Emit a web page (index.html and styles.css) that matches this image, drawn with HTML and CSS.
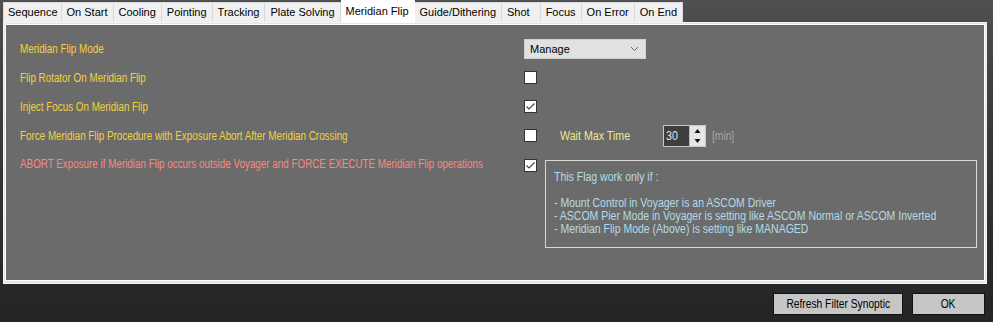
FILE: index.html
```html
<!DOCTYPE html>
<html>
    <head>
        <title>Setup - Meridian Flip</title>
        <link rel="stylesheet" href="styles.css">
    </head>
    <body>
        <div class="window">
            <div class="tabs">
                <div class="tab">Sequence</div>
                <div class="tab">On Start</div>
                <div class="tab">Cooling</div>
                <div class="tab">Pointing</div>
                <div class="tab">Tracking</div>
                <div class="tab">Plate Solving</div>
                <div class="tab selected">Meridian Flip</div>
                <div class="tab">Guide/Dithering</div>
                <div class="tab shot">Shot</div>
                <div class="tab">Focus</div>
                <div class="tab">On Error</div>
                <div class="tab">On End</div>
            </div>
            <div class="panel">
                <div class="page">
                    <div class="form">
                        <label class="lbl"><span class="nar">Meridian Flip Mode</span></label>
                        <div class="select">
                            <span>Manage</span>
                            <svg width="9" height="6" viewBox="0 0 9 6"><path d="M1 1 L4.5 4.5 L8 1" fill="none" stroke="#666" stroke-width="1"/></svg>
                        </div>

                        <label class="lbl"><span class="nar">Flip Rotator On Meridian Flip</span></label>
                        <span class="check"></span>
                        <span></span>

                        <label class="lbl"><span class="nar">Inject Focus On Meridian Flip</span></label>
                        <span class="check"><svg width="11" height="11" viewBox="0 0 11 11"><path d="M1.5 5.5 L4 8 L9.5 2.5" fill="none" stroke="#444" stroke-width="1.2"/></svg></span>
                        <span></span>

                        <label class="lbl"><span class="nar">Force Meridian Flip Procedure with Exposure Abort After Meridian Crossing</span></label>
                        <span class="check"></span>
                        <div class="wait">
                            <span class="wait-lbl"><span class="nar">Wait Max Time</span></span>
                            <div class="spin">
                                <span class="spin-val"><span class="nar">30</span></span>
                                <div class="spin-btns">
                                    <svg width="15" height="10" viewBox="0 0 15 10"><path d="M4.5 7 L7.5 3 L10.5 7 Z" fill="#111"/></svg>
                                    <svg width="15" height="10" viewBox="0 0 15 10"><path d="M4.5 3 L7.5 7 L10.5 3 Z" fill="#111"/></svg>
                                </div>
                            </div>
                            <span class="unit"><span class="nar">[min]</span></span>
                        </div>

                        <label class="lbl red top"><span class="nar">ABORT Exposure if Meridian Flip occurs outside Voyager and FORCE EXECUTE Meridian Flip operations</span></label>
                        <span class="check top"><svg width="11" height="11" viewBox="0 0 11 11"><path d="M1.5 5.5 L4 8 L9.5 2.5" fill="none" stroke="#444" stroke-width="1.2"/></svg></span>
                        <div class="info">
                            <div class="nar">
                                This Flag work only if :<br>
                                <br>
                                - Mount Control in Voyager is an ASCOM Driver<br>
                                - ASCOM Pier Mode in Voyager is setting like ASCOM Normal or ASCOM Inverted<br>
                                - Meridian Flip Mode (Above) is setting like MANAGED
                            </div>
                        </div>
                    </div>
                </div>
            </div>
            <div class="buttons">
                <button class="btn"><span class="nar">Refresh Filter Synoptic</span></button>
                <button class="btn ok"><span class="nar">OK</span></button>
            </div>
        </div>
    </body>
</html>
```

FILE: styles.css
```css
html, body {
    margin: 0;
    padding: 0;
}
body {
    width: 993px;
    height: 322px;
    overflow: hidden;
    font-family: "Liberation Sans", Arial, sans-serif;
}
/* Arial Narrow is not around, so squeeze Arial instead */
.nar {
    display: inline-block;
    white-space: nowrap;
    transform: scaleX(0.82);
    transform-origin: left center;
}
.window {
    height: 322px;
    background: linear-gradient(#4f5052, #3f4042 80px, #2a2b2d 250px, #232426);
}
.tabs {
    display: flex;
    align-items: flex-end;
    height: 22px;
    padding-left: 3px;
}
.tab {
    height: 19px;
    line-height: 19px;
    padding: 0 5px;
    text-align: center;
    background: #f0f0f0;
    border: 1px solid #d9d9d9;
    border-bottom: none;
    border-left: none;
    font-size: 11px;
    color: #000;
}
.tab:first-child {
    border-left: 1px solid #d9d9d9;
    padding: 0 3px 0 4px;
}
.tab.shot {
    padding: 0 10px 0 5px;
}
.tab.selected {
    height: 22px;
    line-height: 20px;
    background: #fff;
    border-color: #fff;
    position: relative;
    z-index: 1;
    margin-bottom: -1px;
}
.panel {
    margin-left: 3px;
    width: 980px;
    height: 257px;
    border: 1px solid #f4f4f4;
    padding: 1px 1px 2px 1px;
    background: #e4e4e4;
}
.page {
    height: 100%;
    box-sizing: border-box;
    background: #6b6b6b;
    border: 1px solid #fff;
    padding: 9px 7px 0 14px;
}
.form {
    display: grid;
    grid-template-columns: 504px 21px minmax(0, 1fr);
    grid-template-rows: 29px 29px 29px 29px auto;
    align-items: center;
}
.lbl {
    font-size: 12px;
    color: #f2d23c;
    white-space: nowrap;
}
.lbl.red {
    color: #f58a84;
}
.top {
    align-self: start;
}
.lbl.top {
    margin-top: 7px;
}
.check {
    width: 11px;
    height: 11px;
    background: #fff;
    border: 1px solid #333;
    display: flex;
}
.check.top {
    margin-top: 9px;
}
.select {
    grid-column: 2 / 4;
    width: 109px;
    height: 18px;
    background: #e1e1e1;
    border: 1px solid #d0d0d0;
    display: flex;
    align-items: center;
    justify-content: space-between;
    padding: 0 6px 0 5px;
    font-size: 11px;
    color: #000;
}
.wait {
    display: flex;
    align-items: center;
    padding-left: 15px;
}
.wait-lbl {
    font-size: 13px;
    color: #eaea8c;
    width: 103px;
}
.spin {
    display: flex;
    width: 41px;
    height: 20px;
    border: 1px solid #c8c8c8;
    background: #3e3e3e;
}
.spin-val {
    flex: 1;
    font-size: 13px;
    line-height: 20px;
    color: #e6e6e6;
    padding-left: 2px;
}
.spin-btns {
    width: 15px;
    display: flex;
    flex-direction: column;
    background: #e6e6e6;
    border-left: 1px solid #bcbcbc;
}
.spin-btns svg {
    display: block;
}
.unit {
    font-size: 12.5px;
    color: #a8a8a8;
    margin-left: 6px;
}
.info {
    align-self: start;
    min-width: 0;
    overflow: hidden;
    margin-top: 10px;
    border: 1px solid #d8d8d8;
    padding: 10px 8px 11px 8px;
    font-size: 12.5px;
    line-height: 13px;
    color: #b4dbe8;
}
.info .nar {
    transform: scaleX(0.84);
}
.buttons {
    display: flex;
    justify-content: flex-end;
    gap: 9px;
    padding: 9px 8px 0 0;
}
.btn {
    height: 22px;
    margin: 0;
    padding: 0;
    background: #c6c6c6;
    border: 1px solid #111;
    font-family: "Liberation Sans", Arial, sans-serif;
    font-size: 12.5px;
    color: #000;
    width: 130px;
}
.btn .nar {
    transform-origin: center;
}
.btn.ok {
    width: 73px;
}
```
